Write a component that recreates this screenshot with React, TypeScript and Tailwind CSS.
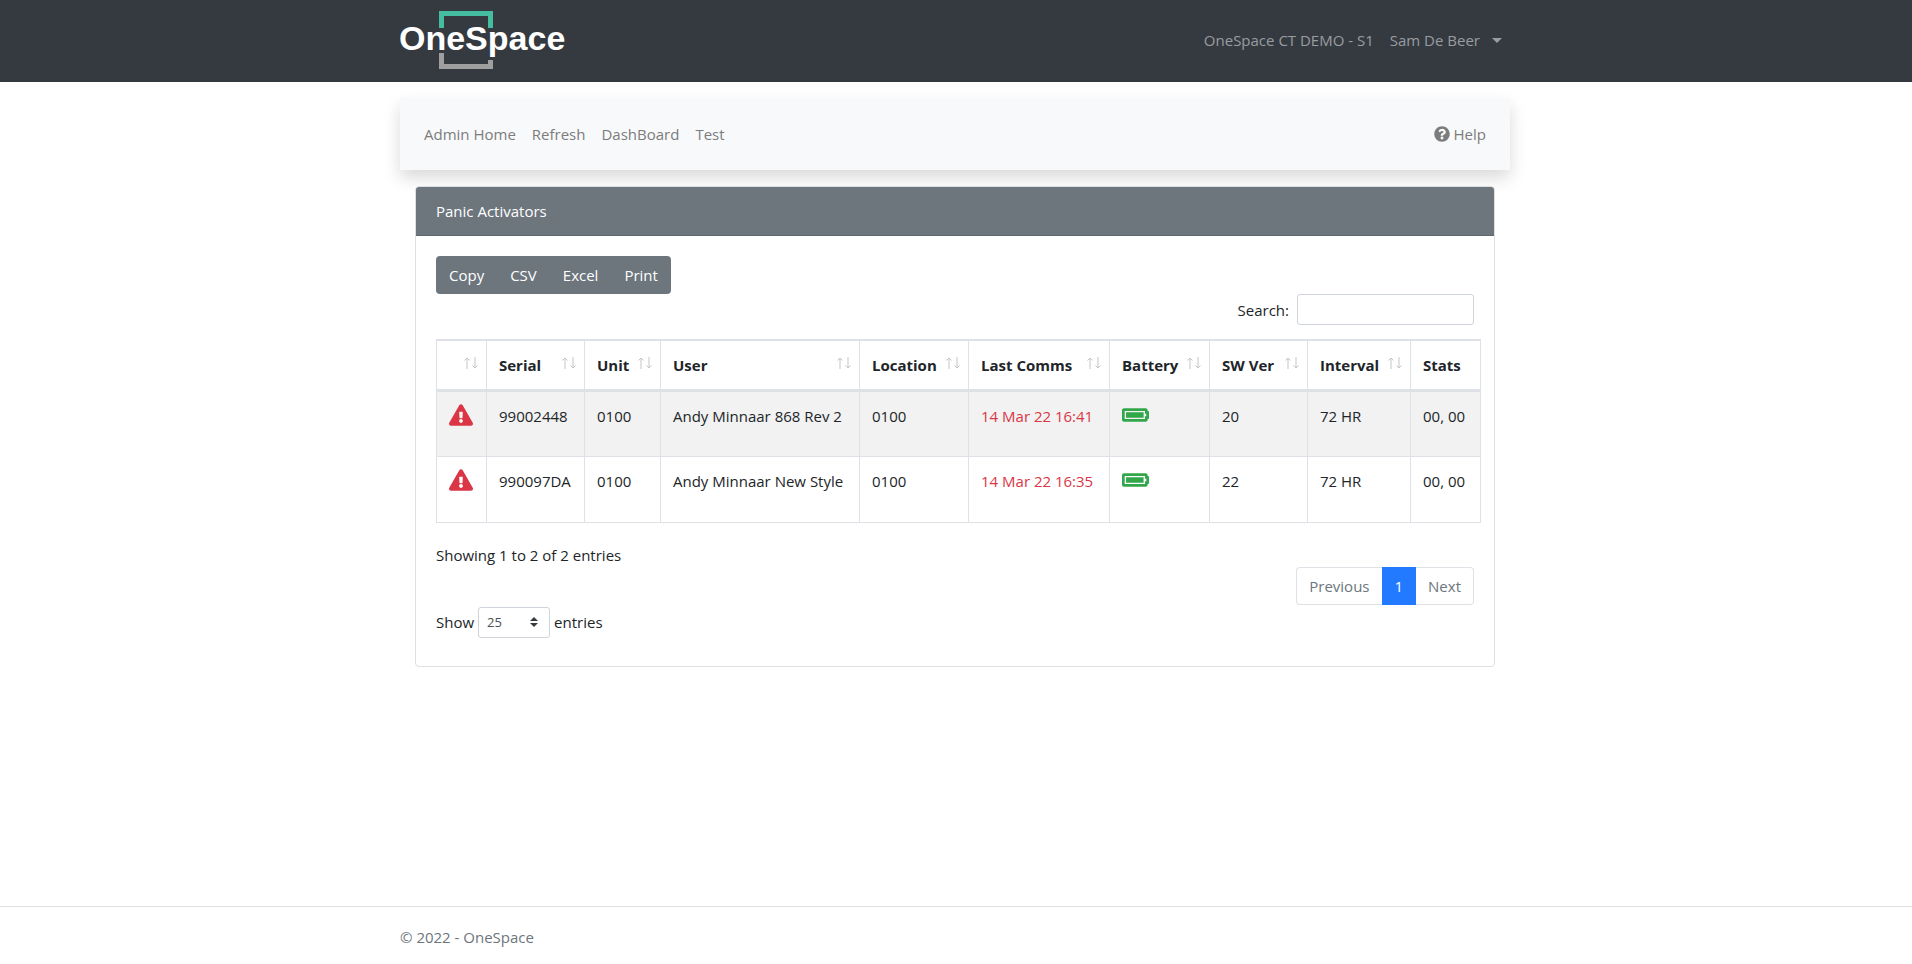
import React, { useState } from 'react';
import { FaBatteryFull, FaExclamationTriangle, FaQuestionCircle } from 'react-icons/fa';

const columns = [
  { title: '', width: 'w-[50px]', sortable: true },
  { title: 'Serial', width: 'w-[98px]', sortable: true },
  { title: 'Unit', width: 'w-[76px]', sortable: true },
  { title: 'User', width: 'w-[199px]', sortable: true },
  { title: 'Location', width: 'w-[109px]', sortable: true },
  { title: 'Last Comms', width: 'w-[141px]', sortable: true },
  { title: 'Battery', width: 'w-[100px]', sortable: true },
  { title: 'SW Ver', width: 'w-[98px]', sortable: true },
  { title: 'Interval', width: 'w-[103px]', sortable: true },
  { title: 'Stats', width: 'w-[70px]', sortable: false },
];

const activators = [
  {
    serial: '99002448',
    unit: '0100',
    user: 'Andy Minnaar 868 Rev 2',
    location: '0100',
    lastComms: '14 Mar 22 16:41',
    version: '20',
    interval: '72 HR',
    stats: '00, 00',
  },
  {
    serial: '990097DA',
    unit: '0100',
    user: 'Andy Minnaar New Style',
    location: '0100',
    lastComms: '14 Mar 22 16:35',
    version: '22',
    interval: '72 HR',
    stats: '00, 00',
  },
];

const Logo = () => (
  <svg width="166" height="60" viewBox="0 0 166 60" role="img" aria-label="OneSpace">
    <path d="M39 17V0h54v17h-5V5H44v12z" fill="#45bda0" />
    <path d="M39 42v16h54v-9h-5v4H44V42z" fill="#9f9f9f" />
    <text
      x="-1"
      y="39"
      fill="#ffffff"
      fontSize="34"
      fontWeight="700"
      fontFamily="'Liberation Sans', Arial, sans-serif"
    >
      OneSpace
    </text>
  </svg>
);

const SortArrows = () => (
  <svg className="shrink-0" width="14" height="16" viewBox="0 0 14 16" fill="none" stroke="#c4c5c6" aria-hidden="true">
    <path d="M3 12V1M0.5 3.5L3 1l2.500 2.500M11 0v11M8.500 8.500L11 11l2.500-2.500" />
  </svg>
);

const Header = () => (
  <header className="bg-[#353a41]">
    <div className="mx-auto flex h-[82px] max-w-[1112px] items-center justify-between pr-0.5">
      <a href="#home">
        <Logo />
      </a>
      <nav className="flex items-center gap-4 pr-2 pb-0.5 text-[#999ca0]">
        <a href="#site">OneSpace CT DEMO - S1</a>
        <button type="button" className="flex items-center gap-3">
          Sam De Beer
          <svg width="10" height="5" viewBox="0 0 10 5" fill="currentColor" aria-hidden="true">
            <path d="M0 0h10L5 5z" />
          </svg>
        </button>
      </nav>
    </div>
  </header>
);

const SubNav = () => (
  <nav className="flex h-[72px] items-center justify-between bg-[#f8f9fa] px-6 text-[#7c7c7d] shadow-[0_8px_16px_rgba(0,0,0,0.15)]">
    <div className="flex gap-4">
      <a href="#admin">Admin Home</a>
      <a href="#refresh">Refresh</a>
      <a href="#dashboard">DashBoard</a>
      <a href="#test">Test</a>
    </div>
    <a href="#help" className="flex items-center gap-1">
      <FaQuestionCircle className="size-4" />
      Help
    </a>
  </nav>
);

const App = () => {
  const [search, setSearch] = useState('');
  const [pageSize, setPageSize] = useState('25');

  return (
    <div className="flex min-h-screen flex-col bg-white font-['Open_Sans','Noto_Sans',sans-serif] text-[15px] leading-6 text-[#212529]">
      <Header />

      <main className="mx-auto w-full max-w-[1112px] grow pt-4 pr-0.5">
        <SubNav />

        <section className="mx-[15px] mt-4 rounded border border-[#dfdfe0] bg-white">
          <h1 className="rounded-t-[3px] border-b border-[#5f666e] bg-[#6d757d] px-5 py-3 text-white">
            Panic Activators
          </h1>

          <div className="p-5 pb-7">
            {/* Export buttons */}
            <div className="inline-flex rounded bg-[#6d757d] align-top text-white">
              <button type="button" className="h-[38px] px-[13px]">Copy</button>
              <button type="button" className="h-[38px] px-[13px]">CSV</button>
              <button type="button" className="h-[38px] px-[13px]">Excel</button>
              <button type="button" className="h-[38px] px-[13px]">Print</button>
            </div>

            <div className="flex items-center justify-end gap-2">
              <label htmlFor="search">Search:</label>
              <input
                id="search"
                type="search"
                value={search}
                onChange={(e) => setSearch(e.target.value)}
                className="h-[31px] w-[177px] rounded-[3px] border border-[#ced4da] bg-white px-2 text-[13px]"
              />
            </div>

            {/* Activators table */}
            <table className="mt-3.5 w-[calc(100%+6px)] table-fixed border-collapse border border-[#dee2e6] text-left whitespace-nowrap">
              <thead>
                <tr>
                  {columns.map((col) => (
                    <th
                      key={col.title}
                      className={`${col.width} h-[50px] border border-t-2 border-b-3 border-[#dee2e6] p-0 font-bold`}
                    >
                      {col.sortable ? (
                        <button
                          type="button"
                          aria-label={col.title || 'Status'}
                          className="flex w-full items-center justify-between pr-2 pl-3"
                        >
                          <span>{col.title}</span>
                          <SortArrows />
                        </button>
                      ) : (
                        <span className="pl-3">{col.title}</span>
                      )}
                    </th>
                  ))}
                </tr>
              </thead>
              <tbody>
                {activators.map((row) => (
                  <tr key={row.serial} className="h-[66px] align-top odd:bg-[#f2f2f2]">
                    <td className="border border-[#dee2e6] px-3 py-3">
                      <FaExclamationTriangle className="h-[22px] w-6 text-[#db3645]" />
                    </td>
                    <td className="border border-[#dee2e6] px-3 py-3">{row.serial}</td>
                    <td className="border border-[#dee2e6] px-3 py-3">{row.unit}</td>
                    <td className="border border-[#dee2e6] px-3 py-3">{row.user}</td>
                    <td className="border border-[#dee2e6] px-3 py-3">{row.location}</td>
                    <td className="border border-[#dee2e6] px-3 py-3 text-[#db3645]">{row.lastComms}</td>
                    <td className="border border-[#dee2e6] px-3 py-3">
                      <FaBatteryFull className="h-[22px] w-[27px] text-[#32a64a]" />
                    </td>
                    <td className="border border-[#dee2e6] px-3 py-3">{row.version}</td>
                    <td className="border border-[#dee2e6] px-3 py-3">{row.interval}</td>
                    <td className="border border-[#dee2e6] px-3 py-3">{row.stats}</td>
                  </tr>
                ))}
              </tbody>
            </table>

            <p className="mt-5">Showing 1 to 2 of 2 entries</p>

            {/* Pagination */}
            <div className="flex justify-end">
              <div className="flex h-[38px] text-[#6d757d]">
                <button type="button" className="rounded-l border border-r-0 border-[#dee2e6] px-3">Previous</button>
                <button type="button" className="bg-[#217aff] px-[13px] text-white">1</button>
                <button type="button" className="rounded-r border border-l-0 border-[#dee2e6] px-3">Next</button>
              </div>
            </div>

            <label className="mt-0.5 flex items-center gap-1">
              Show
              <span className="relative">
                <select
                  value={pageSize}
                  onChange={(e) => setPageSize(e.target.value)}
                  className="block h-[31px] w-[72px] appearance-none rounded-[3px] border border-[#ced4da] bg-white px-2 text-[13px] text-[#495057]"
                >
                  <option>10</option>
                  <option>25</option>
                  <option>50</option>
                  <option>100</option>
                </select>
                <svg
                  className="pointer-events-none absolute top-2.5 right-3"
                  width="8"
                  height="10"
                  viewBox="0 0 8 10"
                  fill="#343a40"
                  aria-hidden="true"
                >
                  <path d="M0 4L4 0l4 4zM0 6h8l-4 4z" />
                </svg>
              </span>
              entries
            </label>
          </div>
        </section>
      </main>

      <footer className="border-t border-[#dee2e6] text-[#6d757d]">
        <div className="mx-auto max-w-[1112px] pt-[18px] pr-0.5 pb-[15px]">&copy; 2022 - OneSpace</div>
      </footer>
    </div>
  );
};

export default App;
